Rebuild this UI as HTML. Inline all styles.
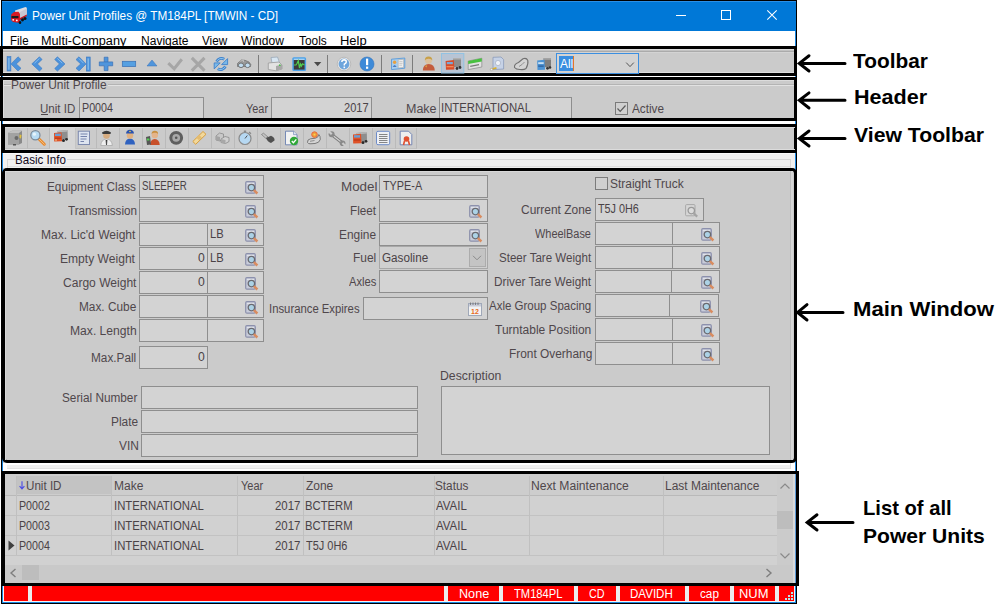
<!DOCTYPE html>
<html><head><meta charset="utf-8">
<style>
*{margin:0;padding:0;box-sizing:border-box}
html,body{width:1000px;height:604px;overflow:hidden;background:#fff}
body{position:relative;font-family:"Liberation Sans",sans-serif;font-size:12px;color:#666}
.a{position:absolute}
.t{position:absolute;white-space:nowrap;line-height:1}
svg{position:absolute;overflow:visible}
</style></head><body>
<div class="a" style="left:1px;top:0px;width:796px;height:604px;background:#000;"></div>
<div class="a" style="left:2px;top:1px;width:794px;height:602px;background:#1a86e0;"></div>
<div class="a" style="left:3px;top:2px;width:792px;height:600px;background:#cbcbcb;"></div>
<div class="a" style="left:2px;top:1px;width:794px;height:30px;background:#0078d7;"></div>
<div class="a" style="left:2px;top:1px;width:794px;height:1px;background:#2a8fe6;"></div>
<svg style="left:10px;top:6px" width="18" height="18" viewBox="0 0 18 18">
<polygon points="5,4.5 15.5,1 16.8,1.8 16.8,9.5 9,13.5 6,10" fill="#dcdce2"/>
<polygon points="9,6.5 16.8,2.5 16.8,9.5 9,13.5" fill="#c8c8d2"/>
<polygon points="9,12.5 16.8,8.5 16.8,10 9,14.5" fill="#c0141c"/>
<ellipse cx="12.5" cy="13.8" rx="1.5" ry="1.6" fill="#111"/>
<ellipse cx="15" cy="12.5" rx="1.5" ry="1.6" fill="#111"/>
<polygon points="1.2,8.5 4,6 8.5,5.8 10,8 10,15.5 8.5,16.8 3,16 1,14" fill="#d81a22"/>
<rect x="1.5" y="10" width="7" height="2.2" fill="#1a1a1a"/>
<circle cx="3.2" cy="13.8" r="0.9" fill="#fff"/>
<circle cx="6.8" cy="14.4" r="0.9" fill="#fff"/>
<ellipse cx="10" cy="16.4" rx="1.3" ry="1.5" fill="#111"/>
</svg>

<div class="t" style="left:31.92px;top:10.24px;font-size:12px;color:#fff;transform:scaleX(0.9803);transform-origin:0 0;">Power Unit Profiles @ TM184PL [TMWIN - CD]</div>
<div class="a" style="left:676px;top:15px;width:10px;height:1px;background:#fff;"></div>
<div class="a" style="left:721px;top:10px;width:10px;height:10px;border:1px solid #fff"></div>
<svg style="left:767px;top:10px" width="10" height="10" viewBox="0 0 10 10"><path d="M0.3 0.3 L9.7 9.7 M9.7 0.3 L0.3 9.7" stroke="#fff" stroke-width="1.05"/></svg>
<div class="a" style="left:3px;top:31px;width:792px;height:15px;background:#fff;"></div>
<div class="t" style="left:9.58px;top:34.72px;font-size:12.5px;color:#000;transform:scaleX(0.9211);transform-origin:0 0;">File</div>
<div class="t" style="left:41.19px;top:34.72px;font-size:12.5px;color:#000;transform:scaleX(1.0145);transform-origin:0 0;">Multi-Company</div>
<div class="t" style="left:140.64px;top:34.72px;font-size:12.5px;color:#000;transform:scaleX(0.9625);transform-origin:0 0;">Navigate</div>
<div class="t" style="left:201.80px;top:34.72px;font-size:12.5px;color:#000;transform:scaleX(0.9333);transform-origin:0 0;">View</div>
<div class="t" style="left:241.30px;top:34.72px;font-size:12.5px;color:#000;transform:scaleX(0.9644);transform-origin:0 0;">Window</div>
<div class="t" style="left:299.30px;top:34.72px;font-size:12.5px;color:#000;transform:scaleX(0.9517);transform-origin:0 0;">Tools</div>
<div class="t" style="left:339.96px;top:34.72px;font-size:12.5px;color:#000;transform:scaleX(1.0375);transform-origin:0 0;">Help</div>
<div class="a" style="left:0px;top:46px;width:797px;height:30px;border:3px solid #000;background:#cbcbcb"></div>
<div class="a" style="left:3px;top:49px;width:791px;height:1px;background:#dcdcdc;"></div>
<div class="a" style="left:3px;top:50px;width:791px;height:1px;background:#c2c2c2;"></div>
<div class="a" style="left:3px;top:51px;width:791px;height:1px;background:#ababab;"></div>
<div class="a" style="left:3px;top:52px;width:791px;height:1px;background:#d4d4d4;"></div>
<div class="a" style="left:3px;top:72px;width:791px;height:1px;background:#dedede;"></div>
<svg style="left:0;top:0" width="1000" height="604" viewBox="0 0 1000 604">
<g fill="none" stroke-linecap="butt" stroke-linejoin="miter">
 <!-- |< -->
 <rect x="7.1" y="56.6" width="3.8" height="14.4" fill="#4b92dc" stroke="#3d78c0" stroke-width="0.6"/>
 <rect x="8.3" y="58" width="1.2" height="11.6" fill="#8cc0ec"/>
 <path d="M11 63.9 L18 56.8 L21 59.6 L16.3 63.9 L21 68.3 L18 71 Z" fill="#4b92dc" stroke="#3d78c0" stroke-width="0.6"/>
 <!-- < -->
 <path d="M31.8 63.9 L39.4 56.8 L42.1 59.5 L37.4 63.9 L42.1 68.5 L39.4 71.1 Z" fill="#4b92dc" stroke="#3d78c0" stroke-width="0.6"/>
 <path d="M34.5 63.2 L39.5 58.4" stroke="#8cc0ec" stroke-width="0.9"/>
 <!-- > -->
 <path d="M65 63.9 L57.4 56.8 L54.7 59.5 L59.4 63.9 L54.7 68.5 L57.4 71.1 Z" fill="#4b92dc" stroke="#3d78c0" stroke-width="0.6"/>
 <path d="M57.3 58.4 L62.3 63.2" stroke="#8cc0ec" stroke-width="0.9"/>
 <!-- >| -->
 <path d="M86 63.9 L79 56.8 L76 59.6 L80.7 63.9 L76 68.3 L79 71 Z" fill="#4b92dc" stroke="#3d78c0" stroke-width="0.6"/>
 <path d="M78.8 58.4 L83.5 63.2" stroke="#8cc0ec" stroke-width="0.9"/>
 <rect x="86.3" y="57" width="3.9" height="14.1" fill="#4b92dc" stroke="#3d78c0" stroke-width="0.6"/>
 <rect x="87.6" y="58.4" width="1.2" height="11.4" fill="#8cc0ec"/>
 <!-- + -->
 <path d="M99.3 61.9 H112.7 V65.8 H108 V70.6 H104.2 V65.8 H99.3 Z M104.2 61.9 V57.2 H108 V61.9" fill="#4f95dc" stroke="#3a70b4" stroke-width="0.7"/>
 <!-- - -->
 <rect x="122.3" y="61.3" width="13.4" height="5.3" fill="#55a0e2" stroke="#3a70b4" stroke-width="0.7"/>
 <!-- triangle -->
 <path d="M147 66 L152 60 L157 66 Z" fill="#4f95dc" stroke="#3a70b4" stroke-width="0.5"/>
 <!-- check gray -->
 <path d="M168.3 63.2 L174.2 68.8 L181.8 59.2" stroke="#a6a6a6" stroke-width="3"/>
 <!-- x gray -->
 <path d="M191.8 57.8 L204.5 70.6 M204.5 57.8 L191.8 70.6" stroke="#a6a6a6" stroke-width="3.1"/>
 <!-- refresh -->
 <path d="M216.6 61.6 A5.3 5.3 0 0 1 224.2 59.2" stroke="#3f82cc" stroke-width="2.8" fill="none"/>
 <path d="M216.6 61.6 A5.3 5.3 0 0 1 224.2 59.2" stroke="#8cc4ec" stroke-width="1" fill="none"/>
 <path d="M227.6 58.6 L227.6 64.6 L221.6 64.6 Z" fill="#7ab8e8" stroke="#3f82cc" stroke-width="0.9"/>
 <path d="M225.4 66.4 A5.3 5.3 0 0 1 217.8 68.8" stroke="#3f82cc" stroke-width="2.8" fill="none"/>
 <path d="M225.4 66.4 A5.3 5.3 0 0 1 217.8 68.8" stroke="#8cc4ec" stroke-width="1" fill="none"/>
 <path d="M214.2 62.9 L214.2 68.9 L220.2 62.9 Z" fill="#7ab8e8" stroke="#3f82cc" stroke-width="0.9"/>
 <!-- binoculars -->
 <path d="M237.5 63.5 L241 60 L245 60.3 L249 62 L250.8 64.5 L250.5 66.5 L237.5 66.5 Z" fill="#9a9a9a" stroke="#6e6e6e" stroke-width="0.7"/>
 <path d="M239.5 61.2 L243.5 60.2 L243.5 62" stroke="#c8c8c8" stroke-width="0.8" fill="none"/>
 <ellipse cx="241" cy="65.3" rx="2.6" ry="2.3" fill="#c0dcf0" stroke="#6a6a6a" stroke-width="0.9"/>
 <ellipse cx="247.6" cy="65.3" rx="2.6" ry="2.3" fill="#c0dcf0" stroke="#6a6a6a" stroke-width="0.9"/>
</g>
 <rect x="258" y="55" width="1" height="18" fill="#7c7c7c"/>
 <!-- printer -->
 <path d="M271 57.5 L277.5 57 L279.5 62.5 L272 63 Z" fill="#d8e6f2" stroke="#9aa8b8" stroke-width="0.8"/>
 <path d="M268.3 63 L279 62 L282 65 L282 69 L276 70.8 L268.3 69.5 Z" fill="#e2e2e2" stroke="#9a9a9a" stroke-width="0.8"/>
 <path d="M276 66 L282 64.5 L282 69 L276 70.8 Z" fill="#a8a8a8"/>
 <circle cx="279.8" cy="65.2" r="0.9" fill="#48c048"/>
 <!-- monitor -->
 <rect x="292.3" y="57.2" width="13.8" height="13.8" rx="1.5" fill="#4ca2ea"/>
 <rect x="293.8" y="58.6" width="10.8" height="1.4" fill="#a8d0f0"/>
 <rect x="293.8" y="60" width="10.8" height="9.6" fill="#3c3c3c"/>
 <path d="M294 65 L296 65 L297 63.5 L298.3 60.8 L299.5 68 L300.5 64 L301.5 66 L302.5 63.8 L304.5 65" stroke="#50d050" stroke-width="1.2" fill="none"/>
 <path d="M314 62 L321.3 62 L317.65 66.2 Z" fill="#4a4a4a"/>
 <rect x="327" y="55" width="1" height="18" fill="#7c7c7c"/>
 <!-- ? -->
 <circle cx="344" cy="64" r="6.8" fill="#e4e4e4" stroke="#b4b4b4" stroke-width="0.8"/>
 <circle cx="344" cy="64" r="5.4" fill="#6ea5dc"/>
 <path d="M341.8 62 Q342 59.8 344.2 59.8 Q346.4 60 346.3 62 Q346 63.5 344.3 64.2 L344.3 65.5" stroke="#fff" stroke-width="1.4" fill="none"/>
 <rect x="343.5" y="66.6" width="1.6" height="1.6" fill="#fff"/>
 <!-- ! -->
 <circle cx="367" cy="64" r="7" fill="#3d8ad8" stroke="#2f72bd" stroke-width="0.6"/>
 <rect x="366" y="58.6" width="2.2" height="6.6" fill="#fff"/>
 <rect x="366" y="66.6" width="2.2" height="2.2" fill="#fff"/>
 <rect x="381" y="55" width="1" height="18" fill="#7c7c7c"/>
 <!-- id card -->
 <path d="M391.5 59.2 L404.8 58 L404.8 68.2 L391.5 69.6 Z" fill="#a6cef0" stroke="#5a9ad8" stroke-width="0.9"/>
 <path d="M398.2 59.8 L403.6 59.3 L403.6 67.4 L398.2 68 Z" fill="#eeeeee" stroke="#a8a8a8" stroke-width="0.6"/>
 <path d="M399.3 61.6 H402.5 M399.3 63.4 H402.5 M399.3 65.2 H402" stroke="#b0b0b0" stroke-width="0.6"/>
 <circle cx="394.6" cy="62.2" r="1.7" fill="#e8a040"/>
 <path d="M392.6 66.8 Q394.6 63.8 396.6 66.8 Z" fill="#2f5fb0"/>
 <rect x="412" y="55" width="1" height="18" fill="#7c7c7c"/>
 <!-- person -->
 <path d="M422.8 70.4 Q423 64.5 428.7 64 Q434.6 64.5 434.8 70.4 Z" fill="#c45c3c"/>
 <path d="M425 66 L427 65.2 L426.5 67.5 Z" fill="#e0b040"/>
 <circle cx="428.5" cy="60.6" r="3.4" fill="#dcc09c"/>
 <path d="M424.8 60.5 Q424.8 56.6 428.5 56.6 Q432.4 56.7 432.3 60.6 Q431.5 58.6 428.5 58.7 Q425.8 58.6 424.8 60.5 Z" fill="#c8a048"/>
 <!-- checked truck button -->
 <rect x="441.5" y="53.5" width="22.3" height="19.5" fill="#b8c4d4" stroke="#92c2e2" stroke-width="1"/>
 <rect x="453" y="58" width="8" height="9" fill="#8c8c8c"/>
 <rect x="453" y="58" width="8" height="1.5" fill="#b0b0b0"/>
 <path d="M445.6 61 L453.8 60 L454.4 69.5 L446 69.8 Z" fill="#d84c2a"/>
 <rect x="446.8" y="62" width="6" height="2.2" fill="#7aa8d8"/>
 <rect x="446.5" y="66" width="7" height="1.3" fill="#f08a5a"/>
 <circle cx="457" cy="68.5" r="1.4" fill="#333"/>
 <circle cx="460" cy="67.5" r="1.4" fill="#333"/>
 <!-- green box -->
 <path d="M468.2 61 L481.8 58.2 L481.8 67 L468.2 69.6 Z" fill="#e2e2e2" stroke="#8a8a8a" stroke-width="0.7"/>
 <path d="M468.2 61 L481.8 58.2 L481.8 61.5 L468.2 64 Z" fill="#48c040"/>
 <rect x="470" y="65" width="9" height="1.2" fill="#7a7a7a" transform="rotate(-11 474 65)"/>
 <!-- doc/key -->
 <path d="M493 57.3 L501 57 L503.6 59.6 L503.6 69 L493 69.6 Z" fill="#c6d2e6" stroke="#8a9aba" stroke-width="0.8"/>
 <circle cx="498" cy="63" r="2.6" fill="#eef2f8" stroke="#9aa4b8" stroke-width="0.6"/>
 <path d="M490.5 69.5 L496.5 67.8" stroke="#d8b030" stroke-width="1.8"/>
 <circle cx="491.5" cy="69.5" r="1.2" fill="#f0f0f0" stroke="#909090" stroke-width="0.5"/>
 <!-- glove -->
 <path d="M514.5 67.5 Q514 64 518.5 62.5 L523 58.8 Q526.5 57.5 527.8 60.5 Q528.5 64 526 68.5 Q524 70 520 69.5 Q516 69.5 514.5 67.5 Z" fill="#d4d4d4" stroke="#707070" stroke-width="1.1"/>
 <path d="M519 66.5 Q522 65 524.5 62" stroke="#808080" stroke-width="0.8" fill="none"/>
 <!-- blue truck -->
 <rect x="543.5" y="58.2" width="7.5" height="9" fill="#7e7e7e"/>
 <rect x="543.5" y="58.2" width="7.5" height="1.5" fill="#a8a8a8"/>
 <path d="M537.2 60.5 L544.5 59.8 L545 69.8 L537.5 70 Z" fill="#4a92d4"/>
 <rect x="538.2" y="62.2" width="5.5" height="1.8" fill="#c8e0f4"/>
 <rect x="538.2" y="65.5" width="5.5" height="1.2" fill="#2c5a94"/>
 <circle cx="547.5" cy="68.3" r="1.4" fill="#333"/>
 <circle cx="550" cy="67.5" r="1.3" fill="#333"/>
 <!-- combobox -->
 <rect x="556.5" y="53.5" width="82" height="20" fill="#d3d3d3" stroke="#3c8fe0" stroke-width="1"/>
 <rect x="559" y="56" width="14" height="15" fill="#3a8ee0"/>
 <rect x="573" y="56" width="1" height="15" fill="#e07828"/>
 <path d="M626.2 62.6 L630 66.6 L633.8 62.6" stroke="#555" stroke-width="1" fill="none"/>
</svg>


<div class="t" style="left:559.80px;top:57.52px;font-size:12.5px;color:#fff;transform:scaleX(0.9538);transform-origin:0 0;">All</div>
<div class="a" style="left:3px;top:76px;width:792px;height:1px;background:#fff;"></div>
<div class="a" style="left:0px;top:77px;width:797px;height:44px;border:3px solid #000;background:#cbcbcb"></div>
<div class="a" style="left:3px;top:80px;width:791px;height:1px;background:#dcdcdc;"></div>
<div class="a" style="left:3px;top:80px;width:1px;height:38px;background:#dcdcdc;"></div>
<div class="a" style="left:4px;top:84px;width:7px;height:1px;background:#b4b4b4;"></div>
<div class="a" style="left:4px;top:85px;width:7px;height:1px;background:#e2e2e2;"></div>
<div class="a" style="left:108px;top:84px;width:686px;height:1px;background:#b4b4b4;"></div>
<div class="a" style="left:108px;top:85px;width:686px;height:1px;background:#e2e2e2;"></div>
<div class="t" style="left:10.64px;top:78.82px;font-size:12.5px;color:#4f474b;transform:scaleX(0.9556);transform-origin:0 0;">Power Unit Profile</div>
<div class="t" style="left:39.88px;top:102.62px;font-size:12.5px;color:#4f474b;transform:scaleX(0.9243);transform-origin:0 0;">Unit ID</div>
<div class="a" style="left:41px;top:114px;width:7px;height:1px;background:#4f474b;"></div>
<div class="a" style="left:79px;top:97px;width:125px;height:21px;background:#d3d3d3;border:1px solid #8e8e8e;border-bottom:none"></div>
<div class="t" style="left:81.94px;top:101.82px;font-size:12.5px;color:#4a4246;transform:scaleX(0.8571);transform-origin:0 0;">P0004</div>
<div class="t" style="left:246.00px;top:102.62px;font-size:12.5px;color:#4f474b;transform:scaleX(0.8720);transform-origin:0 0;">Year</div>
<div class="a" style="left:271px;top:97px;width:101px;height:21px;background:#d3d3d3;border:1px solid #8e8e8e;border-bottom:none"></div>
<div class="t" style="left:344.12px;top:101.82px;font-size:12.5px;color:#4a4246;transform:scaleX(0.8846);transform-origin:0 0;">2017</div>
<div class="t" style="left:406.00px;top:102.62px;font-size:12.5px;color:#4f474b;">Make</div>
<div class="a" style="left:439px;top:97px;width:133px;height:21px;background:#d3d3d3;border:1px solid #8e8e8e;border-bottom:none"></div>
<div class="t" style="left:441.09px;top:101.82px;font-size:12.5px;color:#4a4246;transform:scaleX(0.9082);transform-origin:0 0;">INTERNATIONAL</div>
<div class="a" style="left:615px;top:102px;width:13px;height:13px;border:1px solid #7a7a7a;background:#d0d0d0"></div>
<svg style="left:615px;top:102px" width="13" height="13" viewBox="0 0 13 13"><path d="M2.5 6.5 L5.2 9.3 L10.5 3.5" stroke="#5a5a5a" stroke-width="1.2" fill="none"/></svg>
<div class="t" style="left:632.00px;top:102.62px;font-size:12.5px;color:#4f474b;transform:scaleX(0.9412);transform-origin:0 0;">Active</div>
<div class="a" style="left:3px;top:121px;width:792px;height:3px;background:#fff;"></div>
<div class="a" style="left:2px;top:124px;width:795px;height:29px;border:3px solid #000;background:#cbcbcb"></div>
<div class="a" style="left:5px;top:127px;width:790px;height:1px;background:#dadada"></div>
<div class="a" style="left:5px;top:149px;width:790px;height:1px;background:#dcdcdc"></div>
<div class="a" style="left:5px;top:128px;width:23px;height:21px;border-right:1px solid #bababa;border-bottom:1px solid #c0c0c0"></div>
<div class="a" style="left:28px;top:128px;width:22px;height:21px;border-right:1px solid #bababa;border-bottom:1px solid #c0c0c0"></div>
<div class="a" style="left:50px;top:128px;width:26px;height:21px;background:#d6d6d6;border-right:1px solid #c4c4c4"></div>
<div class="a" style="left:76px;top:128px;width:21px;height:21px;border-right:1px solid #bababa;border-bottom:1px solid #c0c0c0"></div>
<div class="a" style="left:97px;top:128px;width:23px;height:21px;border-right:1px solid #bababa;border-bottom:1px solid #c0c0c0"></div>
<div class="a" style="left:120px;top:128px;width:23px;height:21px;border-right:1px solid #bababa;border-bottom:1px solid #c0c0c0"></div>
<div class="a" style="left:143px;top:128px;width:23px;height:21px;border-right:1px solid #bababa;border-bottom:1px solid #c0c0c0"></div>
<div class="a" style="left:166px;top:128px;width:23px;height:21px;border-right:1px solid #bababa;border-bottom:1px solid #c0c0c0"></div>
<div class="a" style="left:189px;top:128px;width:23px;height:21px;border-right:1px solid #bababa;border-bottom:1px solid #c0c0c0"></div>
<div class="a" style="left:212px;top:128px;width:23px;height:21px;border-right:1px solid #bababa;border-bottom:1px solid #c0c0c0"></div>
<div class="a" style="left:235px;top:128px;width:23px;height:21px;border-right:1px solid #bababa;border-bottom:1px solid #c0c0c0"></div>
<div class="a" style="left:258px;top:128px;width:23px;height:21px;border-right:1px solid #bababa;border-bottom:1px solid #c0c0c0"></div>
<div class="a" style="left:281px;top:128px;width:23px;height:21px;border-right:1px solid #bababa;border-bottom:1px solid #c0c0c0"></div>
<div class="a" style="left:304px;top:128px;width:23px;height:21px;border-right:1px solid #bababa;border-bottom:1px solid #c0c0c0"></div>
<div class="a" style="left:327px;top:128px;width:23px;height:21px;border-right:1px solid #bababa;border-bottom:1px solid #c0c0c0"></div>
<div class="a" style="left:350px;top:128px;width:23px;height:21px;border-right:1px solid #bababa;border-bottom:1px solid #c0c0c0"></div>
<div class="a" style="left:373px;top:128px;width:23px;height:21px;border-right:1px solid #bababa;border-bottom:1px solid #c0c0c0"></div>
<div class="a" style="left:396px;top:128px;width:21px;height:21px;border-right:1px solid #bababa;border-bottom:1px solid #c0c0c0"></div>
<svg style="left:0;top:0" width="1000" height="604" viewBox="0 0 1000 604">
 <!-- safe -->
 <path d="M8 133 L12 130.8 L22 130.8 L22 143 L19 144.5 L8 144.5 Z" fill="#8a8a8a"/>
 <path d="M8 133 L19 133 L19 144.5 L8 144.5 Z" fill="#a2a2a2"/>
 <path d="M8 133 L12 130.8 L22 130.8 L19 133 Z" fill="#c0c0c0"/>
 <circle cx="16.5" cy="138" r="2" fill="#6a6a6a"/>
 <path d="M19.5 134.5 L21.5 135 L21 138.5 L19.5 138 Z" fill="#e0c040"/>
 <rect x="13" y="144" width="3" height="1.5" fill="#555"/>
 <!-- magnifier -->
 <path d="M38.5 138.5 L44.3 144.2" stroke="#e8882c" stroke-width="3" stroke-linecap="round"/>
 <path d="M38.5 138.5 L44.3 144.2" stroke="#f4c080" stroke-width="1" stroke-linecap="round"/>
 <circle cx="35.4" cy="135.3" r="4.6" fill="#b8dcf4" stroke="#7a8a9a" stroke-width="1.2"/>
 <circle cx="34.4" cy="134.2" r="1.6" fill="#e6f4fc"/>
 <!-- truck (checked) -->
 <path d="M57.5 131 L67.5 130 L67.8 139 L58 140 Z" fill="#8e8e8e"/>
 <path d="M57.5 131 L67.5 130 L67.5 131.6 L57.5 132.5 Z" fill="#b8b8b8"/>
 <path d="M54 133 L61.5 132.2 L62.2 141.3 L54.2 141.5 Z" fill="#de5228"/>
 <rect x="55" y="133.6" width="5.8" height="2.4" fill="#6a9ed4"/>
 <rect x="54.8" y="137.6" width="6.5" height="1.2" fill="#b83818"/>
 <circle cx="56" cy="140" r="0.8" fill="#f6e0a0"/>
 <circle cx="63.5" cy="140.5" r="1.5" fill="#2a2a2a"/>
 <circle cx="66.5" cy="139.3" r="1.4" fill="#2a2a2a"/>
 <!-- form doc -->
 <rect x="78.3" y="131.2" width="11.2" height="13.3" fill="#dde4f0" stroke="#7d8aae" stroke-width="1"/>
 <path d="M80.5 134 H87.5 M80.5 136.5 H87 M80.5 139 H86.5 M80.5 141.5 H84" stroke="#5a6a9a" stroke-width="0.8"/>
 <!-- driver -->
 <path d="M100.8 145.5 Q101 139.5 106.5 139 Q112 139.5 112.3 145.5 Z" fill="#eeeeee" stroke="#9a9a9a" stroke-width="0.6"/>
 <circle cx="106.5" cy="135.5" r="3.3" fill="#d6ac80"/>
 <path d="M102 132.5 Q106.5 129.2 111 132.5 L110.5 134 L102.5 134 Z" fill="#3a3a3a"/>
 <path d="M106 140 L106.5 145 L107 140" stroke="#444" stroke-width="0.8"/>
 <!-- police -->
 <path d="M125 144.5 Q125.2 139 130 138.6 Q134.8 139 135 144.5 Z" fill="#2f62c0"/>
 <circle cx="130" cy="135.5" r="3.2" fill="#e0b080"/>
 <path d="M126 133.5 Q126.5 129.8 130 129.8 Q133.5 129.8 134 133.5 Z" fill="#2a52b0"/>
 <circle cx="130" cy="131.5" r="0.8" fill="#f0d040"/>
 <!-- person with phone -->
 <path d="M150 145 Q150.2 139.5 154.8 139 Q159.5 139.5 159.7 145 Z" fill="#c8502a"/>
 <circle cx="154.8" cy="135" r="3.2" fill="#e4b48a"/>
 <path d="M151.5 134 Q151.8 130.8 154.8 130.8 Q158 130.8 158.2 134 Q156.5 132.5 154.8 132.8 Q153 132.6 151.5 134 Z" fill="#c89040"/>
 <path d="M146 137 L150 136 L151 144.5 L147 145 Z" fill="#555"/>
 <rect x="147" y="138.5" width="2.4" height="2" fill="#50d050"/>
 <!-- tire -->
 <circle cx="176.2" cy="137.8" r="6.9" fill="#5e5e5e"/>
 <circle cx="176.2" cy="137.8" r="3.9" fill="#a8a8a8"/>
 <circle cx="176.2" cy="137.8" r="1.3" fill="#555"/>
 <!-- band aid -->
 <path d="M192.8 141.5 L203 131.5 L206 134.3 L195.7 144.3 Z" fill="#f2d89a" stroke="#d8a040" stroke-width="1"/>
 <rect x="197" y="135.5" width="4" height="4" fill="#e4bc70" transform="rotate(-45 199 137.5)"/>
 <!-- gears/boxes -->
 <path d="M216 136 L219.5 133 L223.5 134 L223.5 138 L220 141 L216 140 Z" fill="#c8c8c8" stroke="#8a8a8a" stroke-width="0.8"/>
 <path d="M216 136 L220 137 L220 141 L216 140 Z" fill="#a4a4a4"/>
 <path d="M221 139 L225 136.5 L229 137.5 L229 141.5 L225.5 143.5 L221 142.5 Z" fill="#d0d0d0" stroke="#8a8a8a" stroke-width="0.8"/>
 <path d="M221 139 L225.5 140 L225.5 143.5 L221 142.5 Z" fill="#a8a8a8"/>
 <!-- stopwatch -->
 <circle cx="245" cy="138.5" r="6" fill="#b6d8f2" stroke="#8a8a8a" stroke-width="1.2"/>
 <rect x="243.8" y="130.5" width="2.4" height="2" fill="#8a8a8a"/>
 <path d="M245 138.5 L247.3 135.5" stroke="#444" stroke-width="0.9"/>
 <path d="M249 132 L251 133.8" stroke="#8a8a8a" stroke-width="1.2"/>
 <!-- key -->
 <path d="M261.5 134.5 L263.5 133.2 L268 137 L266 138.5 Z" fill="#c4c4c4" stroke="#6a6a6a" stroke-width="0.6"/>
 <path d="M266 138 L271 135.8 Q275 137.5 274.5 140.5 L271 143 Q267.5 142 266 138 Z" fill="#505050"/>
 <!-- doc check -->
 <path d="M285.5 131.2 L293.5 131.2 L297 134.6 L297 144.8 L285.5 144.8 Z" fill="#f2f2f2" stroke="#6a80b0" stroke-width="0.9"/>
 <path d="M293.5 131.2 L293.5 134.6 L297 134.6" fill="#dce4f2" stroke="#6a80b0" stroke-width="0.6"/>
 <circle cx="294" cy="141" r="4.2" fill="#30a838"/>
 <path d="M291.8 141 L293.4 142.7 L296.3 139.3" stroke="#fff" stroke-width="1.3" fill="none"/>
 <!-- hand coin -->
 <path d="M307.5 142.5 Q307 139.5 310.5 138.8 L315.5 138.2 Q318.5 137.5 318.8 134.5 Q320.5 136 320.3 139.5 Q319.5 142.8 315 143.5 L310 143.8 Q308 143.6 307.5 142.5 Z" fill="#d4d4d4" stroke="#6e6e6e" stroke-width="0.9"/>
 <path d="M310 141.3 L314.5 140.5" stroke="#7a7a7a" stroke-width="0.8"/>
 <circle cx="314.5" cy="134.6" r="2.8" fill="#f0a040" stroke="#e86838" stroke-width="1"/>
 <circle cx="314.5" cy="134.6" r="0.9" fill="#f8d848"/>
 <!-- wrench -->
 <path d="M332.5 135.2 L341.5 142.2" stroke="#7c7c7c" stroke-width="3.2" stroke-linecap="round"/>
 <path d="M332.5 135.2 L341.5 142.2" stroke="#d2d2d2" stroke-width="1.1" stroke-linecap="round"/>
 <circle cx="331.6" cy="134.2" r="3" fill="#8a8a8a"/>
 <circle cx="342.6" cy="143.2" r="2.8" fill="#8a8a8a"/>
 <g transform="translate(331.6 134.2) rotate(-45)"><rect x="-1.1" y="-4.2" width="2.2" height="4.4" fill="#cdcdcd"/></g>
 <g transform="translate(342.6 143.2) rotate(135)"><rect x="-1.1" y="-4.2" width="2.2" height="4.4" fill="#cdcdcd"/></g>
 <!-- truck 2 -->
 <path d="M356.5 133 L366.8 132 L367 141 L357 142 Z" fill="#8e8e8e"/>
 <path d="M356.5 133 L366.8 132 L366.8 133.6 L356.5 134.5 Z" fill="#b8b8b8"/>
 <path d="M353 134.5 L361 133.8 L361.6 143.3 L353.2 143.5 Z" fill="#de5228"/>
 <rect x="354" y="135.2" width="6" height="2.4" fill="#6a9ed4"/>
 <rect x="353.8" y="139.4" width="6.8" height="1.2" fill="#b83818"/>
 <circle cx="363" cy="142.5" r="1.5" fill="#2a2a2a"/>
 <circle cx="366" cy="141.3" r="1.4" fill="#2a2a2a"/>
 <!-- list doc -->
 <rect x="376.5" y="131.3" width="13.2" height="13.4" rx="1.5" fill="#eef0f4" stroke="#6e8cc8" stroke-width="1"/>
 <path d="M379 134.5 H387.5 M379 136.5 H387.5 M379 138.5 H387.5 M379 140.5 H387.5 M379 142.5 H387.5" stroke="#6a6a6a" stroke-width="0.8"/>
 <!-- certificate -->
 <path d="M400.2 131.2 L408.5 131.2 L411.8 134.5 L411.8 144.8 L400.2 144.8 Z" fill="#eeeeee" stroke="#6a7eb0" stroke-width="0.9"/>
 <circle cx="406.5" cy="139" r="2.8" fill="#e05030"/>
 <path d="M404.5 141 L403.5 145 M408.5 141 L409.5 145" stroke="#e05030" stroke-width="1.6"/>
</svg>
<div class="a" style="left:3px;top:153px;width:792px;height:15px;background:#f0f0f0;"></div>
<div class="a" style="left:3px;top:153px;width:792px;height:1px;background:#fafafa;"></div>
<div class="a" style="left:7px;top:159px;width:1px;height:9px;background:#d6d6d6;"></div>
<div class="a" style="left:7px;top:159px;width:8px;height:1px;background:#d6d6d6;"></div>
<div class="a" style="left:67px;top:159px;width:724px;height:1px;background:#d6d6d6;"></div>
<div class="a" style="left:790px;top:159px;width:1px;height:9px;background:#d6d6d6;"></div>
<div class="a" style="left:8px;top:166px;width:782px;height:1px;background:#e0e0e0;"></div>
<div class="t" style="left:14.67px;top:153.62px;font-size:12.5px;color:#10081a;transform:scaleX(0.9259);transform-origin:0 0;">Basic Info</div>
<div class="a" style="left:2px;top:168px;width:795px;height:295px;border:3px solid #000;border-radius:5px;background:#cbcbcb"></div>
<div class="a" style="left:790px;top:171px;width:1px;height:289px;background:#bdbdbd;"></div>
<div class="a" style="left:791px;top:171px;width:2px;height:289px;background:#d6d6d6;"></div>
<div class="a" style="left:5px;top:171px;width:785px;height:1px;background:#d8d8d8;"></div>
<div class="a" style="left:5px;top:171px;width:1px;height:289px;background:#d8d8d8;"></div>
<div class="a" style="left:139px;top:175px;width:125px;height:23px;background:#d3d3d3;border:1px solid #8e8e8e;"></div>
<div class="t" style="left:47.26px;top:180.72px;font-size:12.5px;color:#4f474b;transform:scaleX(0.9419);transform-origin:0 0;">Equipment Class</div>
<svg style="left:245px;top:181px" width="14" height="14" viewBox="0 0 14 14"><rect x="0.7" y="0.7" width="9.6" height="11.4" rx="1.2" fill="#c8ccda" stroke="#8c90ac" stroke-width="1.2"/><rect x="2" y="2" width="7" height="1" fill="#e0e2ea"/><circle cx="6.4" cy="6.6" r="3.2" fill="#acd2e6" stroke="#6a6a70" stroke-width="1.3"/><path d="M8.9 9.2 L12.4 12.5" stroke="#d88c60" stroke-width="2.5"/></svg>
<div class="a" style="left:139px;top:199px;width:125px;height:23px;background:#d3d3d3;border:1px solid #8e8e8e;"></div>
<div class="t" style="left:67.60px;top:204.72px;font-size:12.5px;color:#4f474b;transform:scaleX(0.9342);transform-origin:0 0;">Transmission</div>
<svg style="left:245px;top:205px" width="14" height="14" viewBox="0 0 14 14"><rect x="0.7" y="0.7" width="9.6" height="11.4" rx="1.2" fill="#c8ccda" stroke="#8c90ac" stroke-width="1.2"/><rect x="2" y="2" width="7" height="1" fill="#e0e2ea"/><circle cx="6.4" cy="6.6" r="3.2" fill="#acd2e6" stroke="#6a6a70" stroke-width="1.3"/><path d="M8.9 9.2 L12.4 12.5" stroke="#d88c60" stroke-width="2.5"/></svg>
<div class="a" style="left:139px;top:223px;width:125px;height:23px;background:#d3d3d3;border:1px solid #8e8e8e;"></div>
<div class="a" style="left:207px;top:223px;width:1px;height:23px;background:#8e8e8e;"></div>
<div class="t" style="left:41.44px;top:228.72px;font-size:12.5px;color:#4f474b;transform:scaleX(0.9629);transform-origin:0 0;">Max. Lic'd Weight</div>
<svg style="left:245px;top:229px" width="14" height="14" viewBox="0 0 14 14"><rect x="0.7" y="0.7" width="9.6" height="11.4" rx="1.2" fill="#c8ccda" stroke="#8c90ac" stroke-width="1.2"/><rect x="2" y="2" width="7" height="1" fill="#e0e2ea"/><circle cx="6.4" cy="6.6" r="3.2" fill="#acd2e6" stroke="#6a6a70" stroke-width="1.3"/><path d="M8.9 9.2 L12.4 12.5" stroke="#d88c60" stroke-width="2.5"/></svg>
<div class="a" style="left:139px;top:247px;width:125px;height:23px;background:#d3d3d3;border:1px solid #8e8e8e;"></div>
<div class="a" style="left:207px;top:247px;width:1px;height:23px;background:#8e8e8e;"></div>
<div class="t" style="left:60.43px;top:252.72px;font-size:12.5px;color:#4f474b;transform:scaleX(0.9662);transform-origin:0 0;">Empty Weight</div>
<svg style="left:245px;top:253px" width="14" height="14" viewBox="0 0 14 14"><rect x="0.7" y="0.7" width="9.6" height="11.4" rx="1.2" fill="#c8ccda" stroke="#8c90ac" stroke-width="1.2"/><rect x="2" y="2" width="7" height="1" fill="#e0e2ea"/><circle cx="6.4" cy="6.6" r="3.2" fill="#acd2e6" stroke="#6a6a70" stroke-width="1.3"/><path d="M8.9 9.2 L12.4 12.5" stroke="#d88c60" stroke-width="2.5"/></svg>
<div class="a" style="left:139px;top:271px;width:125px;height:23px;background:#d3d3d3;border:1px solid #8e8e8e;"></div>
<div class="a" style="left:207px;top:271px;width:1px;height:23px;background:#8e8e8e;"></div>
<div class="t" style="left:62.54px;top:276.72px;font-size:12.5px;color:#4f474b;transform:scaleX(0.9640);transform-origin:0 0;">Cargo Weight</div>
<svg style="left:245px;top:277px" width="14" height="14" viewBox="0 0 14 14"><rect x="0.7" y="0.7" width="9.6" height="11.4" rx="1.2" fill="#c8ccda" stroke="#8c90ac" stroke-width="1.2"/><rect x="2" y="2" width="7" height="1" fill="#e0e2ea"/><circle cx="6.4" cy="6.6" r="3.2" fill="#acd2e6" stroke="#6a6a70" stroke-width="1.3"/><path d="M8.9 9.2 L12.4 12.5" stroke="#d88c60" stroke-width="2.5"/></svg>
<div class="a" style="left:139px;top:295px;width:125px;height:23px;background:#d3d3d3;border:1px solid #8e8e8e;"></div>
<div class="a" style="left:207px;top:295px;width:1px;height:23px;background:#8e8e8e;"></div>
<div class="t" style="left:78.95px;top:300.72px;font-size:12.5px;color:#4f474b;transform:scaleX(0.9475);transform-origin:0 0;">Max. Cube</div>
<svg style="left:245px;top:301px" width="14" height="14" viewBox="0 0 14 14"><rect x="0.7" y="0.7" width="9.6" height="11.4" rx="1.2" fill="#c8ccda" stroke="#8c90ac" stroke-width="1.2"/><rect x="2" y="2" width="7" height="1" fill="#e0e2ea"/><circle cx="6.4" cy="6.6" r="3.2" fill="#acd2e6" stroke="#6a6a70" stroke-width="1.3"/><path d="M8.9 9.2 L12.4 12.5" stroke="#d88c60" stroke-width="2.5"/></svg>
<div class="a" style="left:139px;top:319px;width:125px;height:23px;background:#d3d3d3;border:1px solid #8e8e8e;"></div>
<div class="a" style="left:207px;top:319px;width:1px;height:23px;background:#8e8e8e;"></div>
<div class="t" style="left:69.93px;top:324.72px;font-size:12.5px;color:#4f474b;transform:scaleX(0.9687);transform-origin:0 0;">Max. Length</div>
<svg style="left:245px;top:325px" width="14" height="14" viewBox="0 0 14 14"><rect x="0.7" y="0.7" width="9.6" height="11.4" rx="1.2" fill="#c8ccda" stroke="#8c90ac" stroke-width="1.2"/><rect x="2" y="2" width="7" height="1" fill="#e0e2ea"/><circle cx="6.4" cy="6.6" r="3.2" fill="#acd2e6" stroke="#6a6a70" stroke-width="1.3"/><path d="M8.9 9.2 L12.4 12.5" stroke="#d88c60" stroke-width="2.5"/></svg>
<div class="t" style="left:141.62px;top:179.62px;font-size:12.5px;color:#4a4246;transform:scaleX(0.7768);transform-origin:0 0;">SLEEPER</div>
<div class="t" style="left:209.61px;top:227.92px;font-size:12.5px;color:#4a4246;transform:scaleX(0.8929);transform-origin:0 0;">LB</div>
<div class="t" style="left:197.50px;top:251.82px;font-size:12.5px;color:#4a4246;transform:scaleX(0.9714);transform-origin:0 0;">0</div>
<div class="t" style="left:209.61px;top:251.82px;font-size:12.5px;color:#4a4246;transform:scaleX(0.8929);transform-origin:0 0;">LB</div>
<div class="t" style="left:197.50px;top:275.82px;font-size:12.5px;color:#4a4246;transform:scaleX(0.9714);transform-origin:0 0;">0</div>
<div class="a" style="left:139px;top:346px;width:69px;height:23px;background:#d3d3d3;border:1px solid #8e8e8e;"></div>
<div class="t" style="left:91.46px;top:351.52px;font-size:12.5px;color:#4f474b;transform:scaleX(0.9435);transform-origin:0 0;">Max.Pall</div>
<div class="t" style="left:197.50px;top:351.02px;font-size:12.5px;color:#4a4246;transform:scaleX(0.9714);transform-origin:0 0;">0</div>
<div class="a" style="left:141px;top:386px;width:277px;height:23px;background:#d3d3d3;border:1px solid #8e8e8e;"></div>
<div class="t" style="left:62.26px;top:391.72px;font-size:12.5px;color:#4f474b;transform:scaleX(0.9430);transform-origin:0 0;">Serial Number</div>
<div class="a" style="left:141px;top:410px;width:277px;height:23px;background:#d3d3d3;border:1px solid #8e8e8e;"></div>
<div class="t" style="left:111.05px;top:415.72px;font-size:12.5px;color:#4f474b;transform:scaleX(0.9519);transform-origin:0 0;">Plate</div>
<div class="a" style="left:141px;top:434px;width:277px;height:23px;background:#d3d3d3;border:1px solid #8e8e8e;"></div>
<div class="t" style="left:118.60px;top:439.72px;font-size:12.5px;color:#4f474b;transform:scaleX(0.9550);transform-origin:0 0;">VIN</div>
<div class="a" style="left:379px;top:175px;width:109px;height:23px;background:#d3d3d3;border:1px solid #8e8e8e;"></div>
<div class="t" style="left:340.83px;top:180.72px;font-size:12.5px;color:#4f474b;transform:scaleX(1.0719);transform-origin:0 0;">Model</div>
<div class="a" style="left:379px;top:199px;width:109px;height:23px;background:#d3d3d3;border:1px solid #8e8e8e;"></div>
<div class="t" style="left:349.96px;top:204.72px;font-size:12.5px;color:#4f474b;transform:scaleX(0.9370);transform-origin:0 0;">Fleet</div>
<svg style="left:469px;top:205px" width="14" height="14" viewBox="0 0 14 14"><rect x="0.7" y="0.7" width="9.6" height="11.4" rx="1.2" fill="#c8ccda" stroke="#8c90ac" stroke-width="1.2"/><rect x="2" y="2" width="7" height="1" fill="#e0e2ea"/><circle cx="6.4" cy="6.6" r="3.2" fill="#acd2e6" stroke="#6a6a70" stroke-width="1.3"/><path d="M8.9 9.2 L12.4 12.5" stroke="#d88c60" stroke-width="2.5"/></svg>
<div class="a" style="left:379px;top:223px;width:109px;height:23px;background:#d3d3d3;border:1px solid #8e8e8e;"></div>
<div class="t" style="left:339.05px;top:228.72px;font-size:12.5px;color:#4f474b;transform:scaleX(0.9526);transform-origin:0 0;">Engine</div>
<svg style="left:469px;top:229px" width="14" height="14" viewBox="0 0 14 14"><rect x="0.7" y="0.7" width="9.6" height="11.4" rx="1.2" fill="#c8ccda" stroke="#8c90ac" stroke-width="1.2"/><rect x="2" y="2" width="7" height="1" fill="#e0e2ea"/><circle cx="6.4" cy="6.6" r="3.2" fill="#acd2e6" stroke="#6a6a70" stroke-width="1.3"/><path d="M8.9 9.2 L12.4 12.5" stroke="#d88c60" stroke-width="2.5"/></svg>
<div class="a" style="left:379px;top:270px;width:109px;height:23px;background:#d3d3d3;border:1px solid #8e8e8e;"></div>
<div class="t" style="left:349.30px;top:275.72px;font-size:12.5px;color:#4f474b;transform:scaleX(0.8967);transform-origin:0 0;">Axles</div>
<div class="t" style="left:383.00px;top:179.62px;font-size:12.5px;color:#4a4246;transform:scaleX(0.8667);transform-origin:0 0;">TYPE-A</div>
<div class="a" style="left:379px;top:246px;width:109px;height:23px;background:#d0d0d0;border:1px solid #a8a8a8;"></div>
<div class="a" style="left:469px;top:248px;width:17px;height:19px;background:#c4c4c4;border:1px solid #acacac;"></div>
<svg style="left:472px;top:255px" width="10" height="6" viewBox="0 0 10 6"><path d="M1 0.8 L5 4.8 L9 0.8" stroke="#8a8a8a" stroke-width="1" fill="none"/></svg>
<div class="t" style="left:353.24px;top:251.72px;font-size:12.5px;color:#4f474b;transform:scaleX(0.9565);transform-origin:0 0;">Fuel</div>
<div class="t" style="left:382.36px;top:251.72px;font-size:12.5px;color:#4a4246;transform:scaleX(0.9354);transform-origin:0 0;">Gasoline</div>
<div class="a" style="left:363px;top:297px;width:125px;height:23px;background:#d3d3d3;border:1px solid #8e8e8e;"></div>
<div class="t" style="left:269.19px;top:302.72px;font-size:12.5px;color:#4f474b;transform:scaleX(0.9051);transform-origin:0 0;">Insurance Expires</div>
<svg style="left:468px;top:302px" width="14" height="14" viewBox="0 0 14 14">
<rect x="0.5" y="1.5" width="13" height="12" fill="#f2f2f2" stroke="#a0a8b8" stroke-width="1"/>
<rect x="1" y="2" width="12" height="2.5" fill="#c8ccd8"/>
<path d="M2.5 0.5 V3 M5 0.5 V3 M7.5 0.5 V3 M10 0.5 V3" stroke="#707070" stroke-width="0.8"/>
<text x="7" y="11.5" font-size="7" font-family="Liberation Sans" font-weight="bold" fill="#e86a20" text-anchor="middle">12</text>
</svg>
<div class="a" style="left:595px;top:177px;width:13px;height:13px;border:1px solid #7c7c7c;background:#d0d0d0"></div>
<div class="t" style="left:610.44px;top:177.82px;font-size:12.5px;color:#4f474b;transform:scaleX(0.9553);transform-origin:0 0;">Straight Truck</div>
<div class="a" style="left:595px;top:198px;width:109px;height:23px;background:#d3d3d3;border:1px solid #8e8e8e;"></div>
<div class="t" style="left:521.44px;top:203.72px;font-size:12.5px;color:#4f474b;transform:scaleX(0.9569);transform-origin:0 0;">Current Zone</div>
<div class="t" style="left:598.30px;top:202.82px;font-size:12.5px;color:#4a4246;transform:scaleX(0.8638);transform-origin:0 0;">T5J 0H6</div>
<svg style="left:685px;top:204px" width="14" height="14" viewBox="0 0 14 14"><rect x="0.6" y="0.6" width="9.4" height="11.2" rx="1" fill="#d6d6d6" stroke="#a8a8a8" stroke-width="1"/><circle cx="6.3" cy="6.6" r="3.2" fill="#dcdcdc" stroke="#9a9a9a" stroke-width="1.3"/><path d="M8.6 9.2 L12.2 12.6" stroke="#a4a4a4" stroke-width="2.2"/></svg>
<div class="a" style="left:595px;top:222px;width:125px;height:23px;background:#d3d3d3;border:1px solid #8e8e8e;"></div>
<div class="a" style="left:672px;top:222px;width:1px;height:23px;background:#8e8e8e;"></div>
<div class="t" style="left:535.30px;top:227.72px;font-size:12.5px;color:#4f474b;transform:scaleX(0.8750);transform-origin:0 0;">WheelBase</div>
<svg style="left:701px;top:228px" width="14" height="14" viewBox="0 0 14 14"><rect x="0.7" y="0.7" width="9.6" height="11.4" rx="1.2" fill="#c8ccda" stroke="#8c90ac" stroke-width="1.2"/><rect x="2" y="2" width="7" height="1" fill="#e0e2ea"/><circle cx="6.4" cy="6.6" r="3.2" fill="#acd2e6" stroke="#6a6a70" stroke-width="1.3"/><path d="M8.9 9.2 L12.4 12.5" stroke="#d88c60" stroke-width="2.5"/></svg>
<div class="a" style="left:595px;top:246px;width:125px;height:23px;background:#d3d3d3;border:1px solid #8e8e8e;"></div>
<div class="a" style="left:672px;top:246px;width:1px;height:23px;background:#8e8e8e;"></div>
<div class="t" style="left:498.77px;top:251.72px;font-size:12.5px;color:#4f474b;transform:scaleX(0.9253);transform-origin:0 0;">Steer Tare Weight</div>
<svg style="left:701px;top:252px" width="14" height="14" viewBox="0 0 14 14"><rect x="0.7" y="0.7" width="9.6" height="11.4" rx="1.2" fill="#c8ccda" stroke="#8c90ac" stroke-width="1.2"/><rect x="2" y="2" width="7" height="1" fill="#e0e2ea"/><circle cx="6.4" cy="6.6" r="3.2" fill="#acd2e6" stroke="#6a6a70" stroke-width="1.3"/><path d="M8.9 9.2 L12.4 12.5" stroke="#d88c60" stroke-width="2.5"/></svg>
<div class="a" style="left:595px;top:270px;width:125px;height:23px;background:#d3d3d3;border:1px solid #8e8e8e;"></div>
<div class="a" style="left:671px;top:270px;width:1px;height:23px;background:#8e8e8e;"></div>
<div class="t" style="left:494.36px;top:275.72px;font-size:12.5px;color:#4f474b;transform:scaleX(0.9412);transform-origin:0 0;">Driver Tare Weight</div>
<svg style="left:701px;top:276px" width="14" height="14" viewBox="0 0 14 14"><rect x="0.7" y="0.7" width="9.6" height="11.4" rx="1.2" fill="#c8ccda" stroke="#8c90ac" stroke-width="1.2"/><rect x="2" y="2" width="7" height="1" fill="#e0e2ea"/><circle cx="6.4" cy="6.6" r="3.2" fill="#acd2e6" stroke="#6a6a70" stroke-width="1.3"/><path d="M8.9 9.2 L12.4 12.5" stroke="#d88c60" stroke-width="2.5"/></svg>
<div class="a" style="left:595px;top:294px;width:124px;height:23px;background:#d3d3d3;border:1px solid #8e8e8e;"></div>
<div class="a" style="left:669px;top:294px;width:1px;height:23px;background:#8e8e8e;"></div>
<div class="t" style="left:489.20px;top:299.72px;font-size:12.5px;color:#4f474b;transform:scaleX(0.9198);transform-origin:0 0;">Axle Group Spacing</div>
<svg style="left:700px;top:300px" width="14" height="14" viewBox="0 0 14 14"><rect x="0.7" y="0.7" width="9.6" height="11.4" rx="1.2" fill="#c8ccda" stroke="#8c90ac" stroke-width="1.2"/><rect x="2" y="2" width="7" height="1" fill="#e0e2ea"/><circle cx="6.4" cy="6.6" r="3.2" fill="#acd2e6" stroke="#6a6a70" stroke-width="1.3"/><path d="M8.9 9.2 L12.4 12.5" stroke="#d88c60" stroke-width="2.5"/></svg>
<div class="a" style="left:595px;top:318px;width:125px;height:23px;background:#d3d3d3;border:1px solid #8e8e8e;"></div>
<div class="a" style="left:672px;top:318px;width:1px;height:23px;background:#8e8e8e;"></div>
<div class="t" style="left:495.30px;top:323.72px;font-size:12.5px;color:#4f474b;transform:scaleX(0.9600);transform-origin:0 0;">Turntable Position</div>
<svg style="left:701px;top:324px" width="14" height="14" viewBox="0 0 14 14"><rect x="0.7" y="0.7" width="9.6" height="11.4" rx="1.2" fill="#c8ccda" stroke="#8c90ac" stroke-width="1.2"/><rect x="2" y="2" width="7" height="1" fill="#e0e2ea"/><circle cx="6.4" cy="6.6" r="3.2" fill="#acd2e6" stroke="#6a6a70" stroke-width="1.3"/><path d="M8.9 9.2 L12.4 12.5" stroke="#d88c60" stroke-width="2.5"/></svg>
<div class="a" style="left:595px;top:342px;width:125px;height:23px;background:#d3d3d3;border:1px solid #8e8e8e;"></div>
<div class="a" style="left:672px;top:342px;width:1px;height:23px;background:#8e8e8e;"></div>
<div class="t" style="left:508.55px;top:347.72px;font-size:12.5px;color:#4f474b;transform:scaleX(0.9512);transform-origin:0 0;">Front Overhang</div>
<svg style="left:701px;top:348px" width="14" height="14" viewBox="0 0 14 14"><rect x="0.7" y="0.7" width="9.6" height="11.4" rx="1.2" fill="#c8ccda" stroke="#8c90ac" stroke-width="1.2"/><rect x="2" y="2" width="7" height="1" fill="#e0e2ea"/><circle cx="6.4" cy="6.6" r="3.2" fill="#acd2e6" stroke="#6a6a70" stroke-width="1.3"/><path d="M8.9 9.2 L12.4 12.5" stroke="#d88c60" stroke-width="2.5"/></svg>
<div class="t" style="left:440.02px;top:369.62px;font-size:12.5px;color:#4f474b;transform:scaleX(0.9803);transform-origin:0 0;">Description</div>
<div class="a" style="left:441px;top:386px;width:329px;height:69px;background:#d3d3d3;border:1px solid #8e8e8e;"></div>
<div class="a" style="left:3px;top:463px;width:792px;height:8px;background:#ffffff;"></div>
<div class="a" style="left:7px;top:465px;width:783px;height:3px;background:#efefef;"></div>
<div class="a" style="left:7px;top:468px;width:783px;height:1px;background:#e2e2e2;"></div>
<div class="a" style="left:790px;top:463px;width:1px;height:6px;background:#e0e0e0;"></div>
<div class="a" style="left:2px;top:471px;width:797px;height:115px;border:3px solid #000;background:#cbcbcb"></div>
<div class="a" style="left:5px;top:474px;width:772px;height:91px;background:#d1d1d1;"></div>
<div class="a" style="left:5px;top:474px;width:772px;height:21px;background:#cdcdcd;"></div>
<div class="a" style="left:17px;top:476px;width:94px;height:18px;background:#c3c3c3;"></div>
<div class="a" style="left:5px;top:495px;width:772px;height:1px;background:#b9b9b9;"></div>
<div class="a" style="left:5px;top:515px;width:772px;height:1px;background:#c2c2c2;"></div>
<div class="a" style="left:5px;top:535px;width:772px;height:1px;background:#c2c2c2;"></div>
<div class="a" style="left:5px;top:555px;width:772px;height:1px;background:#c2c2c2;"></div>
<div class="a" style="left:16px;top:476px;width:1px;height:79px;background:#c0c0c0;"></div>
<div class="a" style="left:111px;top:476px;width:1px;height:79px;background:#c0c0c0;"></div>
<div class="a" style="left:237px;top:476px;width:1px;height:79px;background:#c0c0c0;"></div>
<div class="a" style="left:303px;top:476px;width:1px;height:79px;background:#c0c0c0;"></div>
<div class="a" style="left:434px;top:476px;width:1px;height:79px;background:#c0c0c0;"></div>
<div class="a" style="left:529px;top:476px;width:1px;height:79px;background:#c0c0c0;"></div>
<div class="a" style="left:663px;top:476px;width:1px;height:79px;background:#c0c0c0;"></div>
<div class="a" style="left:777px;top:474px;width:16px;height:91px;background:#cbcbcb;"></div>
<div class="a" style="left:777px;top:511px;width:16px;height:18px;background:#bdbdbd;"></div>
<svg style="left:779px;top:482px" width="12" height="8" viewBox="0 0 12 8"><path d="M1.5 6.5 L6 2 L10.5 6.5" stroke="#8a8a8a" stroke-width="1.2" fill="none"/></svg>
<svg style="left:779px;top:552px" width="12" height="8" viewBox="0 0 12 8"><path d="M1.5 1.5 L6 6 L10.5 1.5" stroke="#8a8a8a" stroke-width="1.2" fill="none"/></svg>
<div class="a" style="left:5px;top:565px;width:788px;height:18px;background:#c9c9c9;"></div>
<div class="a" style="left:22px;top:565px;width:17px;height:15px;background:#bdbdbd;"></div>
<svg style="left:9px;top:568px" width="8" height="10" viewBox="0 0 8 10"><path d="M6.5 1 L2 5 L6.5 9" stroke="#7e7e7e" stroke-width="1.4" fill="none"/></svg>
<svg style="left:765px;top:568px" width="8" height="10" viewBox="0 0 8 10"><path d="M1.5 1 L6 5 L1.5 9" stroke="#7e7e7e" stroke-width="1.4" fill="none"/></svg>
<div class="a" style="left:793px;top:474px;width:2px;height:109px;background:#dadada;"></div>
<div class="a" style="left:795px;top:474px;width:1px;height:109px;background:#5c9ad6;"></div>
<svg style="left:18.5px;top:480.5px" width="6" height="9" viewBox="0 0 6 9"><path d="M3 0.3 V7.8 M0.6 5.2 L3 7.9 L5.4 5.2" stroke="#4a4ae6" stroke-width="1.1" fill="none"/></svg>
<div class="t" style="left:25.77px;top:479.62px;font-size:12.5px;color:#4f474b;transform:scaleX(0.9297);transform-origin:0 0;">Unit ID</div>
<div class="t" style="left:114.04px;top:479.62px;font-size:12.5px;color:#4f474b;transform:scaleX(0.9621);transform-origin:0 0;">Make</div>
<div class="t" style="left:240.80px;top:479.62px;font-size:12.5px;color:#4f474b;transform:scaleX(0.8800);transform-origin:0 0;">Year</div>
<div class="t" style="left:306.00px;top:479.62px;font-size:12.5px;color:#4f474b;transform:scaleX(0.9571);transform-origin:0 0;">Zone</div>
<div class="t" style="left:435.06px;top:479.62px;font-size:12.5px;color:#4f474b;transform:scaleX(0.9412);transform-origin:0 0;">Status</div>
<div class="t" style="left:531.03px;top:479.62px;font-size:12.5px;color:#4f474b;transform:scaleX(0.9697);transform-origin:0 0;">Next Maintenance</div>
<div class="t" style="left:665.04px;top:479.62px;font-size:12.5px;color:#4f474b;transform:scaleX(0.9567);transform-origin:0 0;">Last Maintenance</div>
<div class="t" style="left:18.65px;top:499.82px;font-size:12.5px;color:#4a4246;transform:scaleX(0.8543);transform-origin:0 0;">P0002</div>
<div class="t" style="left:114.09px;top:499.82px;font-size:12.5px;color:#4a4246;transform:scaleX(0.9061);transform-origin:0 0;">INTERNATIONAL</div>
<div class="t" style="left:275.08px;top:499.82px;font-size:12.5px;color:#4a4246;transform:scaleX(0.9154);transform-origin:0 0;">2017</div>
<div class="t" style="left:305.10px;top:499.82px;font-size:12.5px;color:#4a4246;transform:scaleX(0.9020);transform-origin:0 0;">BCTERM</div>
<div class="t" style="left:436.00px;top:499.82px;font-size:12.5px;color:#4a4246;transform:scaleX(0.9176);transform-origin:0 0;">AVAIL</div>
<div class="t" style="left:18.65px;top:519.82px;font-size:12.5px;color:#4a4246;transform:scaleX(0.8543);transform-origin:0 0;">P0003</div>
<div class="t" style="left:114.09px;top:519.82px;font-size:12.5px;color:#4a4246;transform:scaleX(0.9061);transform-origin:0 0;">INTERNATIONAL</div>
<div class="t" style="left:275.08px;top:519.82px;font-size:12.5px;color:#4a4246;transform:scaleX(0.9154);transform-origin:0 0;">2017</div>
<div class="t" style="left:305.10px;top:519.82px;font-size:12.5px;color:#4a4246;transform:scaleX(0.9020);transform-origin:0 0;">BCTERM</div>
<div class="t" style="left:436.00px;top:519.82px;font-size:12.5px;color:#4a4246;transform:scaleX(0.9176);transform-origin:0 0;">AVAIL</div>
<div class="t" style="left:18.65px;top:539.82px;font-size:12.5px;color:#4a4246;transform:scaleX(0.8543);transform-origin:0 0;">P0004</div>
<div class="t" style="left:114.09px;top:539.82px;font-size:12.5px;color:#4a4246;transform:scaleX(0.9061);transform-origin:0 0;">INTERNATIONAL</div>
<div class="t" style="left:275.08px;top:539.82px;font-size:12.5px;color:#4a4246;transform:scaleX(0.9154);transform-origin:0 0;">2017</div>
<div class="t" style="left:306.00px;top:539.82px;font-size:12.5px;color:#4a4246;transform:scaleX(0.8766);transform-origin:0 0;">T5J 0H6</div>
<div class="t" style="left:436.00px;top:539.82px;font-size:12.5px;color:#4a4246;transform:scaleX(0.9176);transform-origin:0 0;">AVAIL</div>
<svg style="left:8px;top:540px" width="7" height="11" viewBox="0 0 7 11"><path d="M0.5 0.5 L6.5 5.5 L0.5 10.5 Z" fill="#404040"/></svg>
<div class="a" style="left:3px;top:586px;width:792px;height:16px;background:#f4f4f4;"></div>
<div class="a" style="left:4px;top:586px;width:790px;height:15px;background:#ff0000;"></div>
<div class="a" style="left:28px;top:586px;width:4px;height:15px;background:#ececec;"></div>
<div class="a" style="left:444px;top:586px;width:4px;height:15px;background:#ececec;"></div>
<div class="a" style="left:499px;top:586px;width:4px;height:15px;background:#ececec;"></div>
<div class="a" style="left:574px;top:586px;width:4px;height:15px;background:#ececec;"></div>
<div class="a" style="left:616px;top:586px;width:4px;height:15px;background:#ececec;"></div>
<div class="a" style="left:685px;top:586px;width:4px;height:15px;background:#ececec;"></div>
<div class="a" style="left:730px;top:586px;width:4px;height:15px;background:#ececec;"></div>
<div class="a" style="left:775px;top:586px;width:4px;height:15px;background:#ececec;"></div>
<div class="t" style="left:458.55px;top:588.24px;font-size:12px;color:#fff;transform:scaleX(1.0519);transform-origin:0 0;">None</div>
<div class="t" style="left:514.00px;top:588.24px;font-size:12px;color:#fff;transform:scaleX(0.9308);transform-origin:0 0;">TM184PL</div>
<div class="t" style="left:588.70px;top:588.24px;font-size:12px;color:#fff;transform:scaleX(0.9000);transform-origin:0 0;">CD</div>
<div class="t" style="left:630.04px;top:588.24px;font-size:12px;color:#fff;transform:scaleX(0.9628);transform-origin:0 0;">DAVIDH</div>
<div class="t" style="left:700.00px;top:588.24px;font-size:12px;color:#fff;transform:scaleX(0.9789);transform-origin:0 0;">cap</div>
<div class="t" style="left:739.32px;top:588.24px;font-size:12px;color:#fff;transform:scaleX(1.0800);transform-origin:0 0;">NUM</div>
<div class="a" style="left:791px;top:592px;width:2px;height:2px;background:#b8e4e8;"></div>
<div class="a" style="left:788px;top:595px;width:2px;height:2px;background:#b8e4e8;"></div>
<div class="a" style="left:791px;top:595px;width:2px;height:2px;background:#b8e4e8;"></div>
<div class="a" style="left:785px;top:598px;width:2px;height:2px;background:#b8e4e8;"></div>
<div class="a" style="left:788px;top:598px;width:2px;height:2px;background:#b8e4e8;"></div>
<div class="a" style="left:791px;top:598px;width:2px;height:2px;background:#b8e4e8;"></div>
<div class="a" style="left:2px;top:602px;width:794px;height:1px;background:#1a86e0;"></div>
<svg style="left:0;top:0" width="1000" height="604" viewBox="0 0 1000 604">
<g stroke="#000" stroke-width="3" fill="none" stroke-linecap="round" stroke-linejoin="miter">
<path d="M809 55.8 L799.3 63.4 L809 71 M799.5 63.4 H845"/>
<path d="M809 92.9 L799.3 100.3 L809 108 M799.5 100.3 H845"/>
<path d="M809 131 L799.3 138.5 L809 146 M799.5 138.5 H845"/>
<path d="M807 304.7 L797.6 312.4 L807 320 M798 312.4 H843"/>
<path d="M817 514.8 L807.2 522.4 L817 530 M807.5 522.4 H853"/>
</g></svg>
<div class="t" style="left:853.00px;top:50.95px;font-size:20.5px;color:#000;font-weight:bold;transform:scaleX(1.0162);transform-origin:0 0;">Toolbar</div>
<div class="t" style="left:853.95px;top:87.25px;font-size:20.5px;color:#000;font-weight:bold;transform:scaleX(1.0529);transform-origin:0 0;">Header</div>
<div class="t" style="left:854.00px;top:125.15px;font-size:20.5px;color:#000;font-weight:bold;transform:scaleX(1.0341);transform-origin:0 0;">View Toolbar</div>
<div class="t" style="left:852.92px;top:299.25px;font-size:20.5px;color:#000;font-weight:bold;transform:scaleX(1.0785);transform-origin:0 0;">Main Window</div>
<div class="t" style="left:863.01px;top:498.05px;font-size:20.5px;color:#000;font-weight:bold;transform:scaleX(0.9852);transform-origin:0 0;">List of all</div>
<div class="t" style="left:862.97px;top:525.75px;font-size:20.5px;color:#000;font-weight:bold;transform:scaleX(1.0282);transform-origin:0 0;">Power Units</div>
</body></html>
